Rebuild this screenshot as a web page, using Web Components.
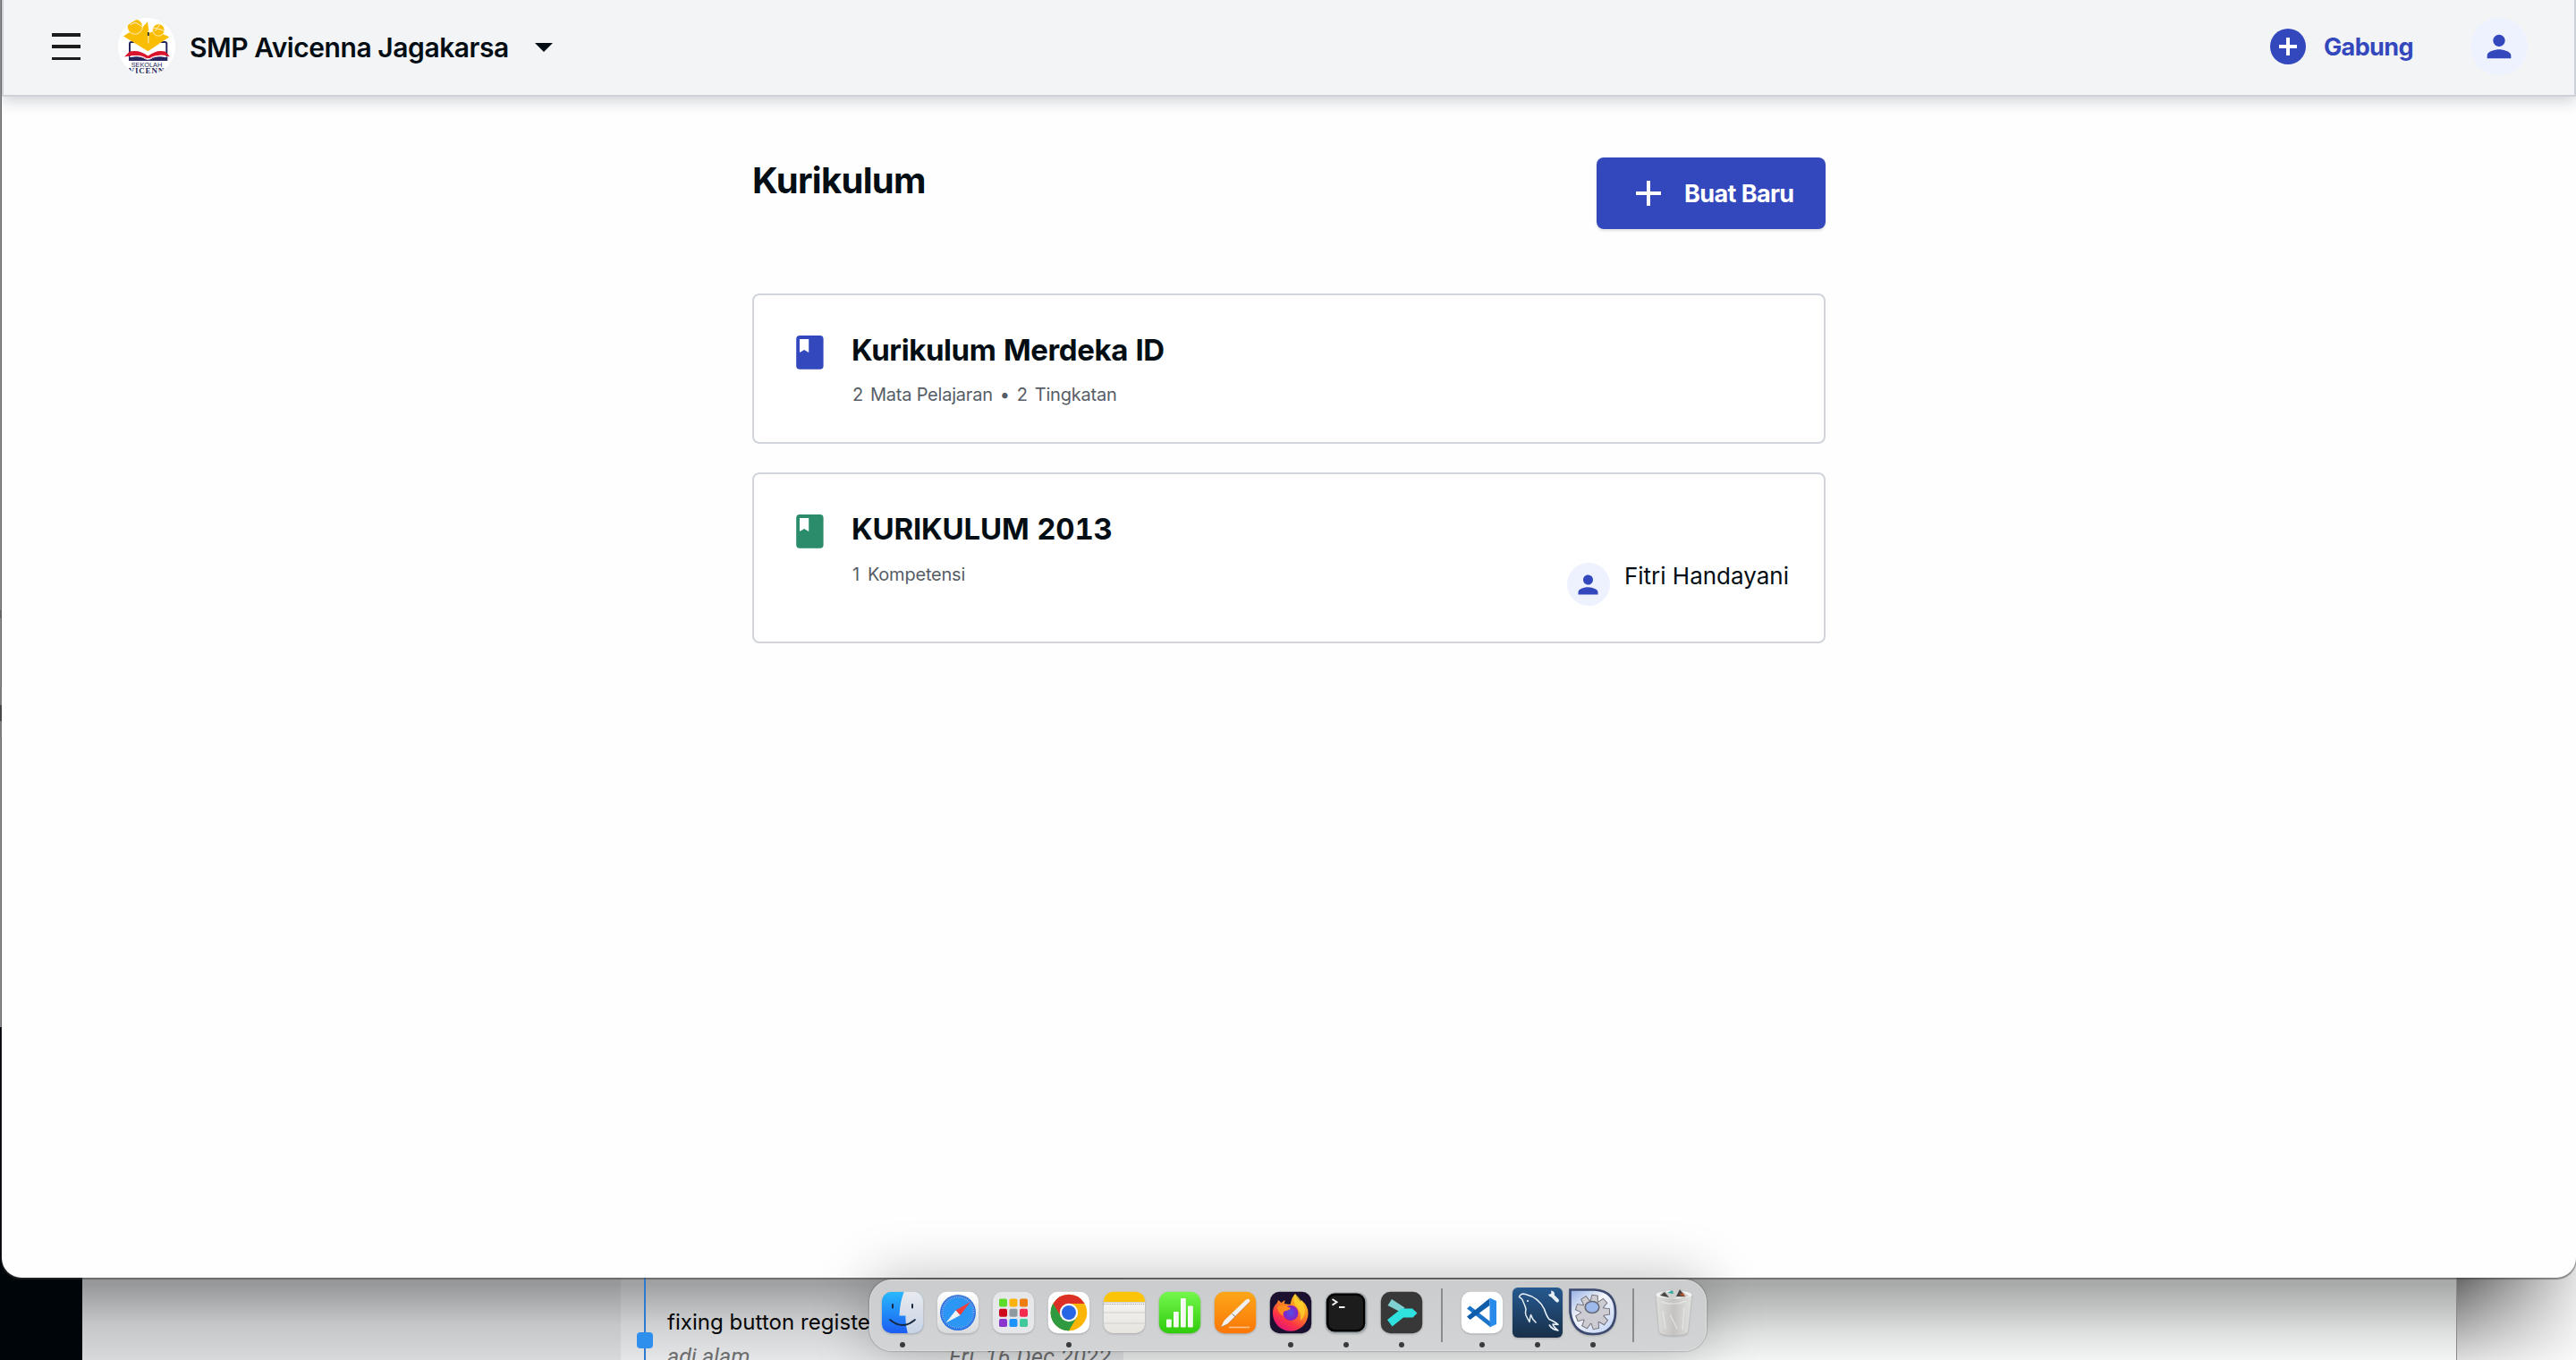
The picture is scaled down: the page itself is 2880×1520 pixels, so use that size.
<!DOCTYPE html>
<html lang="id">
<head>
<meta charset="utf-8">
<title>Kurikulum</title>
<style>
html,body{margin:0;padding:0;width:2880px;height:1520px;overflow:hidden;background:#000;font-family:Inter,"Liberation Sans",sans-serif;color:#030d14}
</style>
</head>
<body>
<mac-desktop>
  <git-window slot="back"></git-window>
  <app-window slot="front">
    <top-bar slot="bar" school="SMP Avicenna Jagakarsa" action="Gabung"></top-bar>
    <curriculum-page heading="Kurikulum" action="Buat Baru">
      <curriculum-card color="#3448bd" heading="Kurikulum Merdeka ID"><span>2</span><span>Mata Pelajaran</span><span>•</span><span>2</span><span>Tingkatan</span></curriculum-card>
      <curriculum-card class="owned" color="#2a8c6b" heading="KURIKULUM 2013" owner="Fitri Handayani"><span>1</span><span>Kompetensi</span></curriculum-card>
    </curriculum-page>
  </app-window>
  <mac-dock slot="dock"></mac-dock>
</mac-desktop>
<script>
const define = (name, render) => customElements.define(name, class extends HTMLElement {
  connectedCallback() {
    if (this.shadowRoot) return;
    const t = document.createElement('template');
    t.innerHTML = render(this);
    this.attachShadow({mode: 'open'}).append(t.content.cloneNode(true));
  }
});
const attr = (el, n) => el.getAttribute(n) || '';

define('mac-desktop', () => `
<style>
:host{display:block;position:relative;width:2880px;height:1520px;overflow:hidden;background:linear-gradient(#8f9092 0 1148px,#00050a 1148px)}
.mark{position:absolute;left:0;width:2px}
.side{position:absolute;right:0;top:1380px;width:134px;height:140px;background:linear-gradient(180deg,rgba(255,255,255,0) 48px,rgba(255,255,255,.78) 140px),linear-gradient(90deg,#666 0,#a2a2a2 50%,#e2e2e2 100%)}
::slotted([slot=back]){position:absolute;left:92px;top:1400px}
::slotted([slot=front]){position:absolute;left:2px;top:0}
::slotted([slot=dock]){position:absolute;left:972px;top:1430px}
</style>
<div class="side"></div>
<slot name="back"></slot><slot name="front"></slot><slot name="dock"></slot>
<div class="mark" style="top:682px;height:9px;background:#666"></div>
<div class="mark" style="top:768px;height:56px;background:#7c7c7d"></div>
<div class="mark" style="top:788px;height:18px;background:#484848"></div>`);

define('git-window', () => `
<style>
:host{display:flex;width:2655px;height:120px;overflow:hidden;box-sizing:border-box;border-right:1px solid #888}
.a{width:602px;background:linear-gradient(#979899 35px,#c5c6c7 80px,#d8d9da 120px)}
.b{display:flex;width:562px;background:linear-gradient(#a0a1a2 35px,#ced0d1 80px,#e5e6e7 120px)}
.c{flex:1;background:linear-gradient(#a9aaaa 35px,#c6c8c7 66px,#dfe1e0 90px,#f3f5f4 120px)}
.rail{width:54px;display:flex;justify-content:center;background:linear-gradient(#2d7bd0,#2d7bd0) center/2px 100% no-repeat}
.node{width:18px;height:18px;border-radius:4px;background:#2f8fec;margin-top:89px}
.log{padding-top:63px;margin-left:-2px;font-size:24px;line-height:30px;white-space:nowrap}
.msg{color:#050505;letter-spacing:.05px}
.meta{display:flex;margin-top:9px;font-family:Roboto,Inter,sans-serif;font-size:25px;font-style:italic;color:#6c6d6e}
.who{width:315px}
.when{letter-spacing:.5px}
</style>
<div class="a"></div>
<div class="b"><div class="rail"><div class="node"></div></div><div class="log"><div class="msg">fixing button registe</div><div class="meta"><span class="who">adi alam</span><span class="when">Fri, 16 Dec 2022</span></div></div></div>
<div class="c"></div>`);

define('app-window', () => `
<style>
:host{display:flex;flex-direction:column;width:2878px;height:1428px;background:#fefefe;border-radius:0 0 22px 22px;box-shadow:0 1px 1px 1px rgba(60,60,60,.5);overflow:hidden}
</style>
<slot name="bar"></slot><slot></slot>`);

const person = `<path fill="#3448bd" d="M12 12c2.2 0 4-1.8 4-4s-1.8-4-4-4-4 1.8-4 4 1.8 4 4 4zm0 2c-2.7 0-8 1.3-8 4v2h16v-2c0-2.700-5.300-4-8-4z"/>`;

define('school-logo', () => `
<style>:host{display:block;width:64px;height:64px}svg{display:block}</style>
<svg width="64" height="64" viewBox="0 0 64 64">
<clipPath id="c"><circle cx="32" cy="32" r="32"/></clipPath>
<g clip-path="url(#c)"><rect width="64" height="64" fill="#fff"/>
<path d="M13 45V29q0-2 2-2h5M54.300 45V29q0-2-2-2h-5" fill="none" stroke="#25275e" stroke-width="2"/>
<path d="M6 20.500 12 16.500 26 12 33 4.300V37z" fill="#f9bd04"/>
<path d="M34.700 17V36.500L57.300 21.300 51 18.500 41 14zM33 4.300V37l1.700-.5V17z" fill="#f9bd04"/>
<circle cx="18.900" cy="9.700" r="8.500" fill="#f9bd04" stroke="#fff" stroke-width=".7"/><circle cx="45.300" cy="13.500" r="6.700" fill="#f9bd04" stroke="#fff" stroke-width=".7"/>
<path d="M11.500 6.500q3 0 5-3.500M14 8q4-4 8-1.500t5 3.500M40 11.500q5 1 6-4M41 14q4-3 7-1t4 1" fill="none" stroke="#fff" stroke-width=".8"/>
<path d="M33.900 14.500v14" stroke="#fff" stroke-width=".8"/>
<path d="M33.800 16v4" stroke="#222" stroke-width="1.600"/>
<path d="M7 43.500 13 37.500q11-2.500 20.500 5 9.500-7.500 19-5 3 2.500 5.500 6-8-3.500-15.500-.8-4 1.500-5.500 2.800h-7q-7-6-23-2z" fill="#d8152c"/>
<path d="M12 48V44.500q12-3 18 1.500 3.500 1.500 7 0 6-4.500 18.300-1.500V48z" fill="#25275e"/>
<path d="M13 43.500q12-3 19 2.200h3q7-5.200 19.500-2.200" fill="none" stroke="#fff" stroke-width="1"/>
<text x="32" y="55" text-anchor="middle" font-family="Liberation Sans" font-size="7.400" textLength="34.500" fill="#25275e">SEKOLAH</text>
<text x="32" y="62.300" text-anchor="middle" font-family="Liberation Serif" font-weight="700" font-size="9" textLength="53" fill="#25275e">AVICENNA</text>
</g></svg>`);

define('top-bar', el => `
<style>
:host{display:flex;align-items:center;box-sizing:border-box;height:108px;flex:none;padding:0 52px 2px 54px;background:#f3f4f6;border:2px solid #cdd2d9;border-top:0;box-shadow:0 4px 16px rgba(20,30,50,.22);position:relative}
.menu{width:32px;height:30px;display:flex;flex-direction:column;justify-content:space-between}
.menu i{height:3.500px;background:#1c1c1c}
school-logo{margin-left:42px}
.name{margin-left:16px;font-weight:600;font-size:30px;line-height:40px;letter-spacing:-.44px;white-space:nowrap;padding-top:2px}
.caret{margin-left:29px;margin-top:2px}
.join{margin-left:auto;display:flex;align-items:center;gap:20px;color:#3448bd;font-weight:700;font-size:27px;line-height:40px;letter-spacing:-.6px}
.join span{padding-top:1px}
.avatar{width:64px;height:64px;border-radius:50%;background:#eef2ff;margin-left:64px;display:flex;align-items:center;justify-content:center}
</style>
<div class="menu"><i></i><i></i><i></i></div>
<school-logo></school-logo>
<div class="name">${attr(el,'school')}</div>
<svg class="caret" width="20" height="10" viewBox="0 0 20 10"><path d="M0 0h20L10 10z" fill="#030d14"/></svg>
<div class="join"><svg width="40" height="40"><circle cx="20" cy="20" r="20" fill="#3448bd"/><path d="M20 10v20M10 20h20" stroke="#fff" stroke-width="4"/></svg><span>${attr(el,'action')}</span></div>
<div class="avatar"><svg width="40" height="40" viewBox="0 0 24 24">${person}</svg></div>`);

define('curriculum-page', el => `
<style>
:host{display:flex;flex-direction:column;width:1200px;margin:68px 0 0 839px}
header{display:flex;justify-content:space-between;align-items:flex-start;height:152px}
h1{margin:0;font-size:40px;line-height:52px;font-weight:700;letter-spacing:-.7px}
button{all:unset;box-sizing:border-box;width:256px;height:80px;border-radius:8px;background:#3448bd;color:#fff;display:flex;align-items:center;padding:0 0 0 44px;font-weight:700;font-size:27px;letter-spacing:-.6px;gap:26px;box-shadow:0 2px 3px rgba(0,0,0,.12);white-space:nowrap}
button span{padding-top:1px}
.list{display:flex;flex-direction:column;gap:32px}
</style>
<header><h1>${attr(el,'heading')}</h1><button><svg width="28" height="28"><path d="M14 0v28M0 14h28" stroke="#fff" stroke-width="4"/></svg><span>${attr(el,'action')}</span></button></header>
<div class="list"><slot></slot></div>`);

define('curriculum-card', el => `
<style>
:host{display:flex;box-sizing:border-box;height:168px;border:2px solid #d1d5db;border-radius:8px;background:#fff;padding:45px 39px 0 47px}
:host(.owned){height:191px}
.book{flex:none;margin-right:31px}
.info{flex:1}
h2{margin:-4px 0 0;font-size:33px;line-height:40px;font-weight:700;letter-spacing:-.4px;font-variant-numeric:tabular-nums;white-space:nowrap}
:host(.owned) h2{letter-spacing:-.2px}
.sub{display:flex;gap:8px;margin:15.500px 0 0 1px;font-size:20px;line-height:28px;letter-spacing:-.22px;color:#565d66;white-space:nowrap}
:host(.owned) .sub{margin-top:17px;gap:9px}
.owner{display:flex;gap:16px;margin-top:54px;font-size:26px;line-height:30px;white-space:nowrap}
.pic{width:48px;height:48px;border-radius:50%;background:#eef2ff;display:flex;align-items:center;justify-content:center}
</style>
<svg class="book" width="31" height="38" viewBox="0 0 31 38"><rect x=".2" width="30.400" height="37.800" rx="4" fill="${attr(el,'color')}"/><path d="M4 4h10.200v15l-5.100-3-5.100 3z" fill="#fff"/></svg>
<div class="info"><h2>${attr(el,'heading')}</h2><div class="sub"><slot></slot></div></div>
${el.hasAttribute('owner') ? `<div class="owner"><div class="pic"><svg width="33" height="33" viewBox="0 0 24 24">${person}</svg></div><span>${attr(el,'owner')}</span></div>` : ''}`);

const base = (fill, r = 10.500) => `<rect x="4.800" y="4.800" width="46.400" height="46.400" rx="${r}" fill="${fill}"/>`;
const teeth = Array.from({length: 9}, (_, i) => `<path d="M-3.800-11-2.800-18.500h5.600L3.800-11z" transform="translate(27.500 27.500) rotate(${i * 40 + 8})"/>`).join('');
const icons = {
finder: `<defs><linearGradient id="a" x2="0" y2="1"><stop stop-color="#27b9fc"/><stop offset="1" stop-color="#1c5cf3"/></linearGradient><linearGradient id="b" x2="0" y2="1"><stop stop-color="#e9eaee"/><stop offset="1" stop-color="#c6d3e6"/></linearGradient><clipPath id="k">${base('#000')}</clipPath></defs><g clip-path="url(#k)">${base('url(#a)')}<path d="M30 4q-5 12-5.500 27.500h7Q31 42 34 52h20V4z" fill="url(#b)"/></g><path d="M17 19v3.500M39 19v3.500" stroke="#16283f" stroke-width="2" stroke-linecap="round"/><path d="M14 36q14 12 28 0" fill="none" stroke="#16283f" stroke-width="1.700" stroke-linecap="round"/>`,
safari: `<defs><linearGradient id="a" x2="0" y2="1"><stop stop-color="#fff"/><stop offset="1" stop-color="#d9dadb"/></linearGradient><linearGradient id="b" x2="0" y2="1"><stop stop-color="#3a78d8"/><stop offset="1" stop-color="#1d6de6"/></linearGradient></defs>${base('url(#a)')}<circle cx="28" cy="28" r="20" fill="url(#b)"/><circle cx="28" cy="28" r="17" fill="#2b96f3"/><circle cx="28" cy="28" r="17.500" fill="none" stroke="#bfe0ff" stroke-width="2.200" stroke-dasharray=".6 1.300" opacity=".7"/><path d="M42 16 30.500 31 25.500 25.500z" fill="#f33d3a"/><path d="M14.500 39.500 30.500 31 25.500 25.500z" fill="#f4f4f5"/>`,
launch: `${base('#e6e7ea')}` + ['#5fdc2a','#fbb30c','#ee7d0b','#cd0a1c','#8f9aa0','#f52a4f','#8b35cf','#1b93fb','#41c99a'].map((c, i) => `<rect x="${12 + i % 3 * 11.500}" y="${12.500 + (i / 3 | 0) * 11.300}" width="9" height="9" rx="1.800" fill="${c}"/>`).join(''),
chrome: `${base('#fff')}<circle cx="28" cy="28" r="20.300" fill="#fbb504"/><path d="M10.400 17.900A20.300 20.300 0 0 0 28 48.300L37 33 19 33z" fill="#2f9a40"/><path d="M10.400 17.900 19.300 33.200 28 28V17.900h17.600A20.300 20.300 0 0 0 10.400 17.900z" fill="#dc3027"/><path d="M10.400 17.900 19.300 33 28 38l4-2-4 12.300A20.300 20.300 0 0 1 10.400 17.900z" fill="#2f9a40"/><circle cx="28" cy="28" r="10.200" fill="#fff"/><circle cx="28" cy="28" r="8" fill="#2767e6"/>`,
notes: `<defs><linearGradient id="a" x2="0" y2="1"><stop stop-color="#f7f7f7"/><stop offset="1" stop-color="#e7e4de"/></linearGradient><clipPath id="k">${base('#000')}</clipPath></defs><g clip-path="url(#k)">${base('url(#a)')}<path d="M4 4h48v12H4z" fill="#fcc409"/><path d="M4 16.500h48M4 28h48M4 40h48" stroke="#cfcecb"/><path d="M5 18.500h46" stroke="#9c9a94" stroke-dasharray="1 1.200"/></g>`,
numbers: `<defs><linearGradient id="a" x2="0" y2="1"><stop stop-color="#74f74c"/><stop offset="1" stop-color="#2fcb0c"/></linearGradient></defs>${base('url(#a)')}<g fill="#f4faf3"><rect x="13" y="35.500" width="5.800" height="9" rx="1"/><rect x="21" y="27" width="5.800" height="17.500" rx="1"/><rect x="29" y="12" width="5.800" height="32.500" rx="1"/><rect x="37" y="20.500" width="5.800" height="24" rx="1"/></g>`,
pages: `<defs><linearGradient id="a" x2="0" y2="1"><stop stop-color="#fda718"/><stop offset="1" stop-color="#fb7607"/></linearGradient></defs>${base('url(#a)')}<path d="M21 44.500h23" stroke="#ffc287" stroke-width="1.600"/><path d="M12 44.500 15.500 37 39.500 14q2.500-2 4-1t0 4L19.500 41z" fill="#f1f1f2"/><path d="M12 44.500 19.500 41 44 16.500" fill="none" stroke="#b86b23" stroke-width=".8"/><path d="m24.500 29.500 3.500 3" stroke="#777" stroke-width="1"/>`,
firefox: `<defs><linearGradient id="a" x1=".9" x2=".3" y2="1"><stop stop-color="#fee32f"/><stop offset=".4" stop-color="#fd9220"/><stop offset=".75" stop-color="#fb3346"/><stop offset="1" stop-color="#e3157c"/></linearGradient><radialGradient id="b"><stop stop-color="#5350e8"/><stop offset="1" stop-color="#8a1fc0"/></radialGradient></defs>${base('#1c1030')}<path d="M33 7q2 6 6 9l1-2q8 7 7.500 15A19.500 19.500 0 0 1 8 29q-.5-7 5-12l1-3 3.500 3 4-3q0 3-1 4l7 1q2-9 5.500-12z" fill="url(#a)"/><circle cx="28" cy="28.500" r="8.500" fill="url(#b)"/><path d="M13 22q4-3 8-2l7 3q-2 3-6 3-4 2-2 6-6-3-7-10z" fill="#fd8b1d"/><path d="M33 7q9 8 11 18 0 8-5 12 1-9-4-15-5-4-2-15z" fill="#fed52c" opacity=".75"/>`,
terminal: `<rect x="4.800" y="5.500" width="46.400" height="45.500" rx="10.500" fill="#99a2a8"/><rect x="5.800" y="6.600" width="43.500" height="43" rx="9.500" fill="#000"/><rect x="8.500" y="9" width="38.500" height="38" rx="7" fill="#1c1c1c"/><path d="m12.500 13 5 3.300-5 3.300M20 22h6.500" fill="none" stroke="#f1f1f1" stroke-width="1.900"/>`,
fork: `${base('#383838')}<path d="M17 13 31.500 22.500 28 28 12.500 20z" fill="#7fd0d0"/><path d="m12 36 16-12.500h12L45.500 28.500 40.500 33.500H30L17.500 43.500z" fill="#2fe2df"/>`,
vscode: `${base('#fff')}<path d="m11 23.500 3.500-3L37 38v6z" fill="#1b73c9"/><path d="M11 32.500 36.500 12v8L14.500 36z" fill="#0f5cab"/><path d="m36.500 11.500 7.500 3.500v26l-7.500 3.500z" fill="#2a8bea"/>`,
mysql: `<defs><linearGradient id="a" x2="0" y2="1"><stop stop-color="#265a90"/><stop offset="1" stop-color="#182f49"/></linearGradient></defs><rect width="56" height="56" rx="6" fill="url(#a)"/><path d="M7.500 11q1-5 7-3.500Q29 11 35.500 24q2.500 8 5.500 11.500 7 3 10 6l-6-.5q1 3 6 7-7-1-10-6.500" fill="none" stroke="#e7eff6" stroke-width="1.600" stroke-linejoin="round"/><path d="M7.500 11q3.500 1 4.500 5 2 4 3 8-1 4 0 7 2 4 4 7.500.5-5 1.500-8 1.500 5 6 9" fill="none" stroke="#e7eff6" stroke-width="1.500" stroke-linejoin="round"/><circle cx="17" cy="15" r="1" fill="#fff"/><path d="m44 8.500 6 6" stroke="#e7eff6" stroke-width="4" stroke-linecap="round"/><path d="M40 7.500q1 3.500 4 3t3-4q-1-3-4-3l.5 3-1.500 1z" fill="#e7eff6"/>`,
gear: `<defs><linearGradient id="a" x2=".8" y2="1"><stop stop-color="#93aee2"/><stop offset=".45" stop-color="#f5f7fd"/><stop offset="1" stop-color="#c7d7f6"/></linearGradient></defs><path d="M2.500 2.500H30Q53 4 53 27.500T29.500 52 2.500 27.500z" fill="url(#a)" stroke="#3c4a70" stroke-width="2.600"/><g fill="#cdccd2" stroke="#73727a" stroke-width="2">${teeth}<circle cx="27.500" cy="27.500" r="12.500"/></g><g fill="#cdccd2">${teeth}<circle cx="27.500" cy="27.500" r="12.500"/></g><ellipse cx="27" cy="22" rx="7.800" ry="6.500" fill="#9db8eb" stroke="#666976" stroke-width="1.600"/>`,
trash: `<defs><linearGradient id="a" x2="1"><stop stop-color="#dededd"/><stop offset=".5" stop-color="#c4c3c0"/><stop offset="1" stop-color="#e2e2e1"/></linearGradient></defs><path d="M8.500 7.500 12 49q1 4.500 16 4.500T44 49l4.500-41.500z" fill="url(#a)"/><ellipse cx="28.500" cy="8" rx="20" ry="4.500" fill="#f2f2f1"/><path d="m12 8 6-5 5 4 4-6 5 2 3-2 6 6 4 2-5 3-7-1-8 2-6-2z" fill="#cfd0ce"/><path d="m13 9 5-4 5 6zM31 10l4-8 6 8z" fill="#474443"/><path d="m21 6 6-3 1 4z" fill="#33a9a0"/><path d="m34 8 5-2 2 4z" fill="#b6562d"/><path d="M14 16q14 5 28-1M16 26l3 20M40 22l-2 25M24 30l8 16" fill="none" stroke="#efefee" stroke-width="1.500" opacity=".6"/>`
};
define('dock-icon', el => `
<style>:host{display:block;position:relative;width:56px;height:56px}svg{display:block;overflow:visible;filter:drop-shadow(0 1px 1px rgba(0,0,0,.2))}
.dot{position:absolute;left:25px;top:61.500px;width:6px;height:6px;border-radius:50%;background:#3a3a3c}</style>
<svg width="56" height="56" viewBox="0 0 56 56">${icons[attr(el,'app')]}</svg>${el.hasAttribute('open') ? '<div class="dot"></div>' : ''}`);

define('mac-dock', () => `
<style>
:host{display:flex;box-sizing:border-box;align-items:flex-start;width:936px;height:80px;padding:7.500px 0 0 8px;gap:6px;border-radius:25px;background:linear-gradient(#cbccce,#d3d4d6);border:1px solid #dcdddf;box-shadow:0 0 2px rgba(0,0,0,.5),0 0 64px rgba(0,0,0,.27)}
i{width:2px;height:60px;margin:1.500px 10px 0;background:#8b8c8e}
</style>
${[['finder',1],['safari'],['launch'],['chrome',1],['notes'],['numbers'],['pages'],['firefox',1],['terminal',1],['fork',1],0,['vscode',1],['mysql',1],['gear',1],0,['trash']].map(x => x ? `<dock-icon app="${x[0]}"${x[1] ? ' open' : ''}></dock-icon>` : '<i></i>').join('')}`);
</script>
</body>
</html>
